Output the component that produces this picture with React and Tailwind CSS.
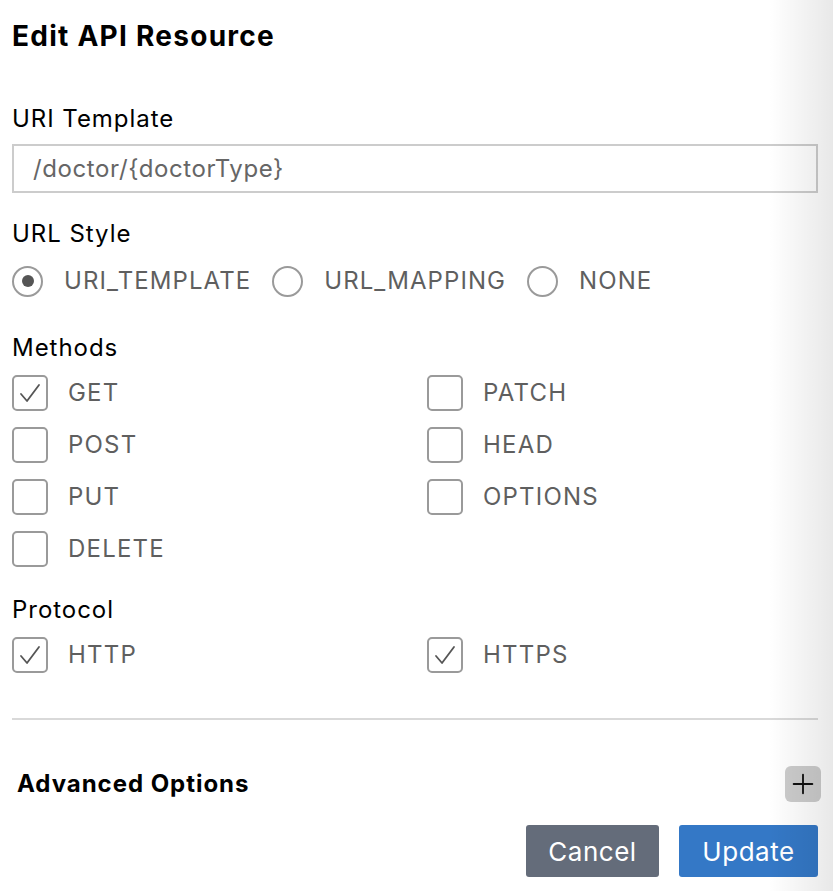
import { Plus } from 'lucide-react';

function Radio({ label, checked }) {
  return (
    <label className="flex items-center gap-[21px]">
      <span className="w-[31px] h-[31px] rounded-full border-2 border-[#9a9a9a] flex items-center justify-center bg-white">
        {checked && <span className="w-[12px] h-[12px] rounded-full bg-[#555]" />}
      </span>
      <span className="text-[24px] tracking-[0.045em] text-[#5f5f5f]">{label}</span>
    </label>
  );
}

function Check({ label, checked }) {
  return (
    <label className="flex items-center gap-[20px] h-[52px]">
      <span className="w-[36px] h-[36px] rounded-[5px] border-2 border-[#9a9a9a] flex items-center justify-center bg-white">
        {checked && (
          <svg width="26" height="26" viewBox="0 0 26 26" fill="none">
            <path d="M4 14 L10 21 L22 5" stroke="#555" strokeWidth="1.8" strokeLinecap="round" strokeLinejoin="round" />
          </svg>
        )}
      </span>
      <span className="text-[24px] tracking-[0.05em] text-[#5f5f5f]">{label}</span>
    </label>
  );
}

export default function App() {
  const metodos = [
    ['GET', true, 'PATCH', false],
    ['POST', false, 'HEAD', false],
    ['PUT', false, 'OPTIONS', false],
  ];

  return (
    <div className="relative w-[833px] h-[891px] bg-white overflow-hidden font-['Inter',sans-serif] text-black">
      {/* sombra del panel a la derecha */}
      <div className="absolute top-0 right-0 w-[64px] h-full bg-gradient-to-r from-transparent to-black/[0.09] pointer-events-none" />

      <div className="pl-[12px] pr-[15px] pt-[18px]">
        <h1 className="text-[28px] font-bold leading-[36px] tracking-[0.045em]">Edit API Resource</h1>

        <p className="mt-[50px] text-[24px] leading-[30px] tracking-[0.04em]">URI Template</p>
        <div className="mt-[10px] h-[49px] border-2 border-[#cccccc] flex items-center px-[19px] text-[24px] tracking-[0.025em] text-[#666]">
          /doctor/{'{doctorType}'}
        </div>

        <p className="mt-[26px] text-[24px] leading-[30px] tracking-[0.04em]">URL Style</p>
        <div className="mt-[14px] flex items-center gap-[21px]">
          <Radio label="URI_TEMPLATE" checked />
          <Radio label="URL_MAPPING" />
          <Radio label="NONE" />
        </div>

        <p className="mt-[34px] text-[24px] leading-[30px] tracking-[0.04em]">Methods</p>
        <div className="mt-[4px] grid grid-cols-2 w-[830px]">
          {metodos.map(([a, ac, b, bc]) => (
            <div key={a} className="contents">
              <Check label={a} checked={ac} />
              <Check label={b} checked={bc} />
            </div>
          ))}
          <Check label="DELETE" />
        </div>

        <p className="mt-[20px] text-[24px] leading-[30px] tracking-[0.04em]">Protocol</p>
        <div className="mt-[4px] grid grid-cols-2 w-[830px]">
          <Check label="HTTP" checked />
          <Check label="HTTPS" checked />
        </div>

        <div className="mt-[37px] h-[2px] bg-[#d9d9d9]" />

        <div className="mt-[46px] flex items-center justify-between pl-[5px]">
          <h2 className="text-[24px] font-bold tracking-[0.04em]">Advanced Options</h2>
          <button className="w-[36px] h-[36px] rounded-[6px] bg-[#cccccc] flex items-center justify-center mr-[-3px]">
            <Plus size={32} strokeWidth={1.4} color="#111" />
          </button>
        </div>

        <div className="mt-[23px] flex justify-end gap-[20px]">
          <button className="w-[133px] h-[52px] rounded-[3px] bg-[#646c7a] text-white text-[26px] tracking-[0.02em]">Cancel</button>
          <button className="w-[139px] h-[52px] rounded-[3px] bg-[#3478c6] text-white text-[26px] tracking-[0.02em]">Update</button>
        </div>
      </div>
    </div>
  );
}
